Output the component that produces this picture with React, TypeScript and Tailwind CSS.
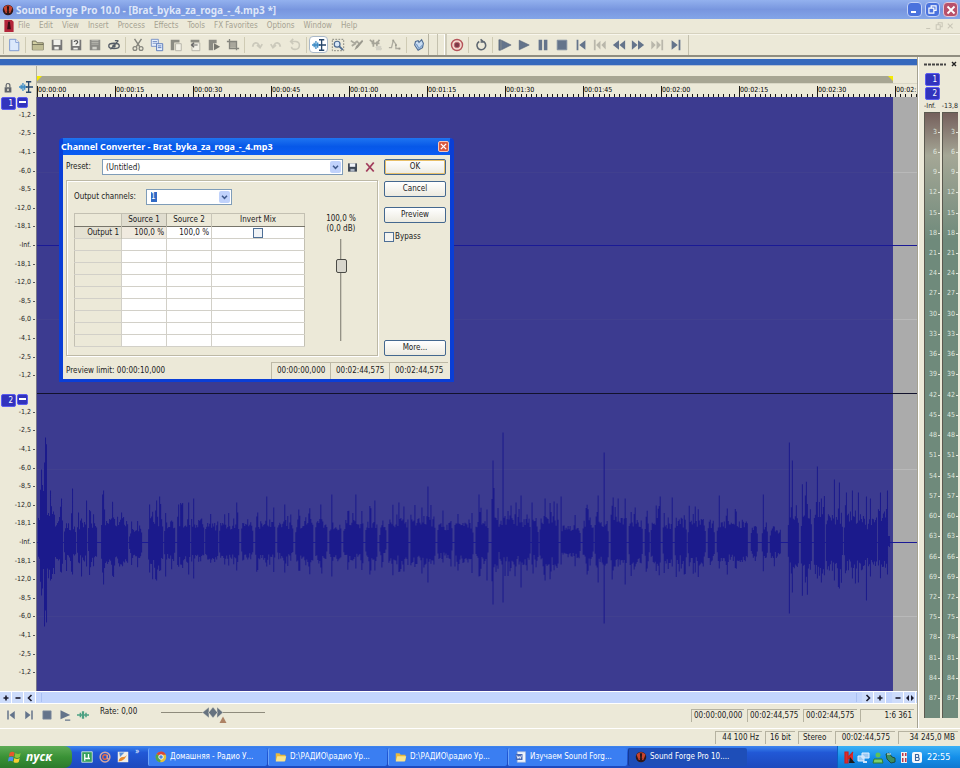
import React, { useState } from "react";
import clsx from "clsx";

const FONT = "font-['DejaVu_Sans_Condensed','DejaVu_Sans',sans-serif]";

const menus = ["File", "Edit", "View", "Insert", "Process", "Effects", "Tools", "FX Favorites", "Options", "Window", "Help"];

const dbLabels = ["-1,2", "-2,5", "-4,1", "-6,0", "-8,5", "-12,0", "-18,1", "-Inf.", "-18,1", "-12,0", "-8,5", "-6,0", "-4,1", "-2,5", "-1,2"];

const rulerLabels = [
  "00:00:00", "00:00:15", "00:00:30", "00:00:45", "00:01:00", "00:01:15",
  "00:01:30", "00:01:45", "00:02:00", "00:02:15", "00:02:30",
];

const meterLabels = Array.from({ length: 29 }, (_, i) => (i + 1) * 3);

const steel = "#64748b";
const pale = "#b9b7ab";
const mid = "#85857d";

const icons: Record<string, React.ReactNode> = {
  new: (
    <>
      <path d="M3 1.500h7l3.500 3.500v9.500H3z" fill="#dbe8fb" stroke="#7291cf" />
      <path d="M10 1.500V5h3.500" fill="#fff" stroke="#7291cf" />
    </>
  ),
  open: (
    <>
      <path d="M1.500 13.500v-10h4l1.500 2h7v8z" fill="#d3d0a4" stroke="#66654f" />
      <path d="M1.500 7.500h12.500" stroke="#66654f" />
      <path d="M2 8h12v5.500H2z" fill="#c1be95" />
    </>
  ),
  save: (
    <>
      <path d="M2 2h12v12H2z" fill="#777" />
      <path d="M4 2h8v6H4zM5 10h5v3H5z" fill="#f1f1ed" />
    </>
  ),
  saveAs: (
    <>
      <path d="M2 2h12v12H2z" fill="#777" />
      <path d="M4 2h8v7H4zM5 11h5v2H5z" fill="#f1f1ed" />
      <path d="M6 4.500c0-2 4-2 4 0 0 1.500-2 1.500-2 3" fill="none" stroke="#555" strokeWidth="1.300" />
    </>
  ),
  saveAll: (
    <>
      <path d="M2 2h12v12H2z" fill="#8b8b86" />
      <path d="M4 3h8M4 5h8M4 7h8" stroke="#bdbdb6" />
      <path d="M5 10h5v3H5z" fill="#cfcfc8" />
    </>
  ),
  render: (
    <>
      <ellipse cx="8" cy="9" rx="6" ry="3" fill="none" stroke="#555c66" strokeWidth="1.500" />
      <path d="M4 13L13 3M9 3l4 0" stroke="#555c66" strokeWidth="1.400" />
      <circle cx="8" cy="9" r="2" fill="#555c66" />
    </>
  ),
  cut: (
    <>
      <path d="M4 1l6 9M12 1L6 10" stroke={mid} strokeWidth="1.600" />
      <circle cx="4.500" cy="12" r="2.200" fill="none" stroke={mid} strokeWidth="1.400" />
      <circle cx="11.500" cy="12" r="2.200" fill="none" stroke={mid} strokeWidth="1.400" />
    </>
  ),
  copy: (
    <>
      <path d="M1.500 1.500h8v8h-8z" fill="#e6effc" stroke="#6f8cc4" />
      <path d="M3 4h5M3 6h5" stroke="#6f8cc4" />
      <path d="M7.500 6.500h7v8h-7z" fill="#e6effc" stroke="#5072b8" />
      <path d="M9 9h4M9 11h4" stroke="#5072b8" />
    </>
  ),
  paste: (
    <>
      <path d="M2 2h10v3H6v9H2z" fill="#8b8b83" />
      <path d="M7.500 6.500h6.500v8H7.500z" fill="#f2f0e6" stroke="#b1afa4" />
    </>
  ),
  pasteSpecial: (
    <>
      <path d="M3 2h10v3H3z" fill="#8b8b83" />
      <path d="M4.500 5.500h9v9h-9z" fill="#f2f0e6" stroke="#b1afa4" />
      <path d="M11 8H5M7 5.500L4 8l3 2.500" stroke="#666" strokeWidth="1.400" fill="none" />
    </>
  ),
  pastePlay: (
    <>
      <path d="M2 2h9v4H7v8H2z" fill="#8b8b83" />
      <path d="M8 6l7 4-7 4z" fill="#77776f" />
    </>
  ),
  crop: (
    <>
      <path d="M4 4h8v7H4z" fill="#a9a79c" />
      <path d="M4 1v11h11M1 4h11v10" fill="none" stroke={mid} strokeWidth="1.500" />
    </>
  ),
  undo: <path d="M3 10c1-6 6-5 7-2l1 2M8 8l3.500 3L14 7" fill="none" stroke="#cbc9bb" strokeWidth="2" />,
  redo: <path d="M13 10c-1-6-6-5-7-2l-1 2M8 8l-3.500 3L2 7" fill="none" stroke="#cbc9bb" strokeWidth="2" />,
  repeat: <path d="M4 4h5c6 1 5 9-1 9-3 0-4-2-4-3M6 1L3 4l3 3" fill="none" stroke="#cbc9bb" strokeWidth="1.800" />,
  edit: (
    <>
      <path d="M0 8h9M2.500 5.500v5M4.500 3.500v9M6.500 5v6" fill="none" stroke="#3e8cc6" strokeWidth="1.500" />
      <path d="M8 2h6M8 14h6M11 2v12M8 8h8" stroke="#27476b" strokeWidth="1.500" />
    </>
  ),
  magnify: (
    <>
      <path d="M1.500 1.500h13v13h-13z" fill="none" stroke="#7a7a74" strokeDasharray="2 1.500" />
      <circle cx="7" cy="7" r="3.300" fill="#d9e8f8" stroke="#4c6a92" strokeWidth="1.400" />
      <path d="M9.500 9.500l4 4" stroke="#4c6a92" strokeWidth="2" />
    </>
  ),
  pencil: (
    <>
      <path d="M1 3l4 3 3-2 3 3M2 9l5-3" stroke="#aaa89c" strokeWidth="2" fill="none" />
      <path d="M14 2L7 9l-2 5 4-3 6-7z" fill="#9b998e" />
    </>
  ),
  event: (
    <>
      <path d="M1 2l4 4M3 6h9M5 2v8M9 4v6M12 2l-3 4M8 10l6 3" stroke="#a6a498" strokeWidth="2" fill="none" />
      <path d="M8 9h6v5H8z" fill="#d3d1c5" />
    </>
  ),
  envelope: (
    <>
      <path d="M1 11h3l2-8 3 4v5h5" fill="none" stroke="#aeaca0" strokeWidth="1.500" />
      <path d="M5 2h2v2H5zM8 7h2v2H8zM12 11h2v2h-2z" fill="#9e9c90" />
    </>
  ),
  plugin: (
    <>
      <path d="M4 4l3-1 1 2 3-3 2 4-1 5-5 3-4-6z" fill="#c9ddf2" stroke="#506e95" strokeWidth="1.300" />
      <path d="M5 7l3 5 4-4" fill="none" stroke="#6f95c4" strokeWidth="1.200" />
    </>
  ),
  record: (
    <>
      <circle cx="8" cy="8" r="6.300" fill="#f3dcd2" stroke="#b5545a" strokeWidth="1.600" />
      <circle cx="8" cy="8" r="3.200" fill="#7d3a48" stroke="#c46b70" />
    </>
  ),
  loop: <path d="M6 4a5 5 0 1 0 5.500.5M7.500 1.500L11 4.500H7.500" fill="none" stroke="#5d6670" strokeWidth="1.800" />,
  playAll: <path d="M1 2h2v12H1zM4 2.500L15 8 4 13.500z" fill={steel} stroke="#49596e" strokeWidth=".6" />,
  play: <path d="M2.500 2.500L14 8 2.500 13.500z" fill={steel} stroke="#49596e" strokeWidth=".6" />,
  pause: <path d="M3 2h4v12H3zM9 2h4v12H9z" fill={steel} />,
  stop: <path d="M2.500 2.500h11v11h-11z" fill={steel} stroke="#8290a2" />,
  start: <path d="M3 2h2v12H3zM13 2.500v11L6 8z" fill={steel} />,
  prev: <path d="M1 2h2v12H1zM8.500 3v10L3.500 8zM14.500 3v10l-5-5z" fill={pale} />,
  rewind: <path d="M8 2.500v11L1 8zM15 2.500v11L8.500 8z" fill={steel} />,
  forward: <path d="M1 2.500v11L7.500 8zM8 2.500v11L15 8z" fill={steel} />,
  next: <path d="M13 2h2v12h-2zM7.500 3v10l5-5zM1.500 3v10l5-5z" fill={pale} />,
  end: <path d="M11 2h2v12h-2zM3 2.500v11L10 8z" fill={steel} />,
  playUnder: <path d="M2 1.500L15 8 2 13.500zM8 14h7v1.500H8z" fill={steel} />,
  scrub: <path d="M0 7h16v2H0zM3.500 5h2v6h-2zM6.500 3h3v10h-3zM11 5h2v6h-2z" fill="#4ca183" />,
  lock: (
    <>
      <path d="M3.500 7h9v7h-9z" fill="#60656b" />
      <path d="M5.500 7V4.500a2.500 2.500 0 0 1 5 0V7" fill="none" stroke="#60656b" strokeWidth="1.600" />
      <path d="M7 9h2v3H7z" fill="#e8e5d6" />
    </>
  ),
  floppy: (
    <>
      <path d="M1.500 2h13v12h-13z" fill="#3c4654" />
      <path d="M4 2h8v5H4z" fill="#eef2f8" />
      <path d="M5 10h6v4H5z" fill="#aab3c0" />
    </>
  ),
  remove: <path d="M3 3l10 11M13 2L3 14" stroke="#a23c5c" strokeWidth="2.400" />,
  folder: (
    <>
      <path d="M1 13V3h5l1.500 2H14v8z" fill="#e9b93c" />
      <path d="M1 14l2-7h12l-2 7z" fill="#fbe48c" />
    </>
  ),
  chrome: (
    <>
      <circle cx="8" cy="8" r="7" fill="#e4c33b" />
      <path d="M8 8L2 4a7 7 0 0 1 12.500 1H8z" fill="#d9453a" />
      <path d="M8 8l-1 7A7 7 0 0 1 2 4z" fill="#4fa44e" />
      <circle cx="8" cy="8" r="3" fill="#4a86dd" stroke="#fff" strokeWidth="1.200" />
    </>
  ),
  word: (
    <>
      <path d="M3 1h11v14H3z" fill="#eef3fb" stroke="#9fb4da" />
      <path d="M1 4h9v8H1z" fill="#4668b5" />
      <path d="M2.500 6l1.500 4 1.500-3L7 10l1.500-4" fill="none" stroke="#fff" strokeWidth="1.200" />
    </>
  ),
  forge: (
    <>
      <circle cx="8" cy="8" r="7" fill="#33191a" />
      <path d="M2 5a7 7 0 0 1 12 0l-3 7H5z" fill="#c8442e" />
      <path d="M6.500 3h3l-.5 7h1l-2 4-2-4h1z" fill="#2a1415" />
    </>
  ),
};

const Icon = ({ name, className = "size-[14px]" }: { name: string; className?: string }) => (
  <svg viewBox="0 0 16 16" className={clsx("shrink-0", className)} aria-hidden="true">
    {icons[name]}
  </svg>
);

const ToolButton = ({ name, active }: { name: string; active?: boolean }) => (
  <button
    aria-label={name}
    className={clsx(
      "flex h-[17px] w-[19px] shrink-0 items-center justify-center",
      active && "rounded-sm border border-[#a9b8c8] bg-white"
    )}
  >
    <Icon name={name} />
  </button>
);

const Separator = () => (
  <div className="flex w-[5px] shrink-0 justify-center">
    <span className="h-4 w-px bg-[#cfcbb4]" />
  </div>
);

const TitleBar = () => (
  <header className="flex h-[19px] items-center bg-linear-to-b from-[#93b1ee] via-[#7896df] to-[#83a5e8] px-[2px]">
    <Icon name="forge" className="size-[12px]" />
    <h1 className="ml-[2px] flex-1 font-['Noto_Sans',sans-serif] text-[10px] leading-[14px] font-bold whitespace-nowrap text-[#dde6f9]">
      Sound Forge Pro 10.0 - [Brat_byka_za_roga_-_4.mp3 *]
    </h1>
    <div className="flex gap-[3px]">
      <button aria-label="Minimize" className="flex size-[15px] items-end rounded-sm border border-[#c3d2f6] bg-[#4a72dd] p-[3px]">
        <span className="h-[2px] w-[5px] bg-white" />
      </button>
      <button aria-label="Restore" className="flex size-[15px] items-center justify-center rounded-sm border border-[#c3d2f6] bg-[#4a72dd]">
        <svg viewBox="0 0 10 10" className="size-[9px]" fill="none" stroke="#fff" strokeWidth="1.300">
          <path d="M3.500 3V1h5.500v5H7M1 3.500h5.500V9H1z" />
        </svg>
      </button>
      <button aria-label="Close" className="flex size-[15px] items-center justify-center rounded-sm border border-[#e3c9d8] bg-[#b8506a]">
        <svg viewBox="0 0 10 10" className="size-[10px]" stroke="#fff" strokeWidth="1.800">
          <path d="M1.500 1.500l7 7M8.500 1.500l-7 7" />
        </svg>
      </button>
    </div>
  </header>
);

const MenuBar = () => (
  <nav className="flex h-[15px] items-center border-b border-[#d6d2bf] pl-1 text-[#a5a292]">
    <svg viewBox="0 0 10 13" className="mr-[4px] h-[12px] w-[10px]">
      <path d="M0 0h8l2 2v11H0z" fill="#b3263a" />
      <path d="M4 2h2l1 8H3z" fill="#3a0d14" />
    </svg>
    <div className="flex flex-1 gap-[9px]">
      {menus.map((m) => (
        <button key={m} className="whitespace-nowrap">
          {m}
        </button>
      ))}
    </div>
    <div className="flex gap-2 pr-1">
      <svg viewBox="0 0 36 10" className="h-[8px] w-[34px]" fill="none" stroke="#c9c6b7" strokeWidth="1.300">
        <path d="M2 8h5M17 3V1h5v5h-2M14.500 3.500h5V9h-5zM29 2l6 6M35 2l-6 6" />
      </svg>
    </div>
  </nav>
);

const Toolbar = () => (
  <div className="flex h-[23px] items-center border-b-2 border-[#8f8d80] pl-[3px] [box-shadow:inset_0_1px_#f8f6ec]">
    <span className="h-[18px] w-px bg-[#c4c1ae]" />
    <ToolButton name="new" />
    <Separator />
    {["open", "save", "saveAs", "saveAll", "render"].map((n) => <ToolButton key={n} name={n} />)}
    <Separator />
    {["cut", "copy", "paste", "pasteSpecial", "pastePlay", "crop"].map((n) => <ToolButton key={n} name={n} />)}
    <Separator />
    {["undo", "redo", "repeat"].map((n) => <ToolButton key={n} name={n} />)}
    <Separator />
    <ToolButton name="edit" active />
    {["magnify", "pencil", "event", "envelope"].map((n) => <ToolButton key={n} name={n} />)}
    <Separator />
    <ToolButton name="plugin" />
    <div className="flex h-[21px] w-[19px] justify-between border-l border-[#b7b4a2] pl-2">
      <span className="w-px bg-[#c4c1ae]" />
      <span className="w-[3px] border-l border-white bg-[#cfccba]" />
    </div>
    <ToolButton name="record" />
    <Separator />
    <ToolButton name="loop" />
    <Separator />
    {["playAll", "play", "pause", "stop", "start", "prev", "rewind", "forward", "next", "end"].map((n) => (
      <ToolButton key={n} name={n} />
    ))}
    <span className="ml-[3px] h-5 w-px bg-[#c4c1ae]" />
  </div>
);

const minorTicks = Array.from({ length: 14 }, (_, i) => `M${Math.round((i + 1) * 5.2) - 0.5} 0V3`).join("");

const Ruler = () => (
  <div className="flex h-[31px]">
    <div className="flex w-[37px] shrink-0 items-end gap-[5px] border-r border-[#b4b19e] pb-[3px] pl-[2px]">
      <Icon name="lock" className="size-[12px]" />
      <Icon name="edit" className="size-[14px]" />
    </div>
    <div className="min-w-0 flex-1 pt-[10px]">
      <div className="mr-[24px] flex h-[7px] justify-between bg-[#a7a593]">
        <svg viewBox="0 0 5 5" className="size-[5px]"><path d="M0 0h5L0 5z" fill="#f4ea00" /></svg>
        <svg viewBox="0 0 5 5" className="size-[5px]"><path d="M0 0h5v5z" fill="#f4ea00" /></svg>
      </div>
      <div className="flex h-[14px] items-end overflow-hidden border-t border-[#dad7c6]">
        {rulerLabels.map((label) => (
          <div key={label} className="w-[78px] shrink-0 border-l border-[#1a1a1a]">
            <span className="block text-[7px] leading-[8px] text-black">{label}</span>
            <svg viewBox="0 0 77 3" className="h-[3px] w-[77px]" stroke="#1a1a1a">
              <path d={minorTicks} />
            </svg>
          </div>
        ))}
        <div className="min-w-0 flex-1 border-l border-[#1a1a1a]">
          <span className="block text-[7px] leading-[8px] text-black">00:02:</span>
          <svg viewBox="0 0 22 3" className="h-[3px] w-[22px]" stroke="#1a1a1a">
            <path d={minorTicks} />
          </svg>
        </div>
      </div>
    </div>
  </div>
);

// [start, end, amplitude up, amplitude down] in wave units
const bursts: number[][] = [
  [1, 3, 30, 24], [3, 7, 70, 52], [7, 10, 84, 70], [10, 18, 34, 32], [18, 26, 22, 18], [27, 39, 16, 16], [40, 50, 19, 18],
  [51, 60, 18, 17], [64, 91, 22, 20], [92, 105, 12, 13], [111, 126, 23, 22], [127, 138, 19, 16], [140, 153, 21, 19],
  [154, 167, 20, 17], [168, 181, 17, 15], [182, 202, 18, 16], [204, 216, 17, 15], [218, 238, 19, 17], [240, 256, 18, 15],
  [258, 276, 20, 17], [278, 290, 20, 18], [292, 304, 17, 16], [306, 326, 19, 16], [328, 340, 20, 18], [342, 349, 15, 14],
  [351, 371, 20, 18], [373, 398, 22, 19], [400, 415, 17, 14], [417, 436, 20, 18], [438, 451, 19, 18], [454, 457, 70, 48],
  [457, 461, 32, 30], [461, 493, 22, 19], [494, 501, 20, 18], [502, 521, 22, 20], [523, 543, 16, 14], [545, 556, 20, 17],
  [557, 571, 22, 20], [573, 589, 22, 20], [591, 605, 20, 19], [607, 612, 17, 18], [613, 623, 20, 18], [625, 635, 19, 18],
  [637, 649, 20, 18], [650, 668, 20, 20], [670, 677, 20, 19], [679, 710, 18, 17], [713, 720, 14, 16], [724, 730, 18, 17],
  [732, 743, 12, 13], [750, 761, 32, 26], [763, 774, 32, 30], [776, 787, 36, 28], [788, 805, 24, 24], [806, 828, 26, 24],
  [829, 839, 24, 20], [840, 850, 30, 24], [850, 852, 8, 6],
];

// [x, up, down]
const spikes: number[][] = [
  [8, 105, 68], [7, 80, 84], [13, 52, 38], [24, 44, 30], [35, 54, 32], [41, 30, 20], [49, 42, 24], [65, 48, 30], [66, 52, 42],
  [84, 30, 22], [112, 38, 30], [119, 42, 38], [122, 46, 24], [128, 28, 34], [144, 38, 20], [151, 40, 32], [156, 44, 36], [199, 40, 28], [229, 46, 24],
  [247, 38, 30], [283, 38, 25], [294, 48, 34], [318, 48, 26], [337, 42, 28], [361, 40, 24], [390, 56, 40], [405, 32, 20], [441, 48, 34],
  [449, 33, 38], [455, 82, 62], [465, 110, 60], [483, 47, 45], [494, 40, 22], [507, 44, 38], [523, 46, 22], [560, 47, 40], [566, 90, 81],
  [575, 45, 28], [580, 44, 24], [587, 44, 42], [622, 46, 20], [634, 45, 24], [657, 36, 30], [681, 47, 26], [689, 34, 30], [725, 48, 28],
  [751, 100, 71], [754, 82, 50], [767, 47, 40], [779, 76, 36], [783, 44, 40], [796, 63, 38], [801, 60, 34], [808, 50, 28], [814, 52, 36],
  [820, 50, 40], [828, 46, 58], [832, 44, 34], [849, 52, 32],
];

const wavePath = () => {
  let seed = 7;
  const rand = () => {
    seed = (seed * 16807) % 2147483647;
    return seed / 2147483647;
  };
  let d = "";
  bursts.forEach(([from, to, up, down]) => {
    for (let x = from; x < to; x++) {
      const edge = Math.min(x - from, to - 1 - x) === 0 ? 0.7 : 1;
      const jump = rand() > 0.82 ? 1.6 : 1;
      const u = up * edge * jump * (0.7 + rand() * 0.5);
      const l = down * edge * jump * (0.7 + rand() * 0.5);
      d += `M${x + 0.5} ${(148.5 - u).toFixed(1)}V${(148.5 + l).toFixed(1)}`;
    }
  });
  spikes.forEach(([x, u, l]) => {
    d += `M${x + 0.5} ${148.5 - u}V${148.5 + l}`;
  });
  return d;
};

const wave = wavePath();

const ChannelBadge = ({ n }: { n: number }) => (
  <span className="flex h-[13px] w-[15px] items-center justify-end rounded-xs border border-[#5a5cf0] bg-[#3133bd] pr-[2px] text-[8px] leading-none text-white">
    {n}
  </span>
);

const Track = ({ n, hasWave }: { n: number; hasWave?: boolean }) => (
  <div className="flex min-h-[297px] flex-1">
    <div className="relative flex w-[37px] shrink-0 flex-col border-r border-[#77758a] py-[9px] text-[7px] leading-[9px]">
      <div className="absolute top-0 left-[1px] flex gap-[1px]">
        <ChannelBadge n={n} />
        <button aria-label="Minimize channel" className="flex h-[11px] w-[11px] items-start justify-center rounded-xs border border-[#5a5cf0] bg-[#3133bd] pt-[3px]">
          <span className="h-[2px] w-[7px] bg-white" />
        </button>
      </div>
      {dbLabels.map((l, i) => (
        <span key={i} className="flex flex-1 items-center justify-end gap-[2px] pr-px text-[#222]">
          {l}
          <span className="h-px w-[2px] bg-[#555]" />
        </span>
      ))}
    </div>
    <div className="relative min-w-0 flex-1">
      <svg viewBox="0 0 879 297" preserveAspectRatio="none" className="absolute inset-0 size-full">
        <rect width="879" height="297" fill="#ababab" />
        <path d="M0 75.500H879M0 222.500H879" stroke="#b9b9b9" />
        <rect width="855" height="297" fill="#3c3b90" />
        <path d="M0 75.500H855M0 222.500H855" stroke="#41408f" />
        <path d="M0 148.500H879" stroke="#1a1a96" />
        {hasWave && <path d={wave} stroke="#1b1a8c" strokeWidth="1" fill="none" />}
        {!hasWave && <path d="M0 296.500H879" stroke="#12122c" />}
      </svg>
    </div>
  </div>
);

const ScrollButton = ({ children, label }: { children: React.ReactNode; label: string }) => (
  <button aria-label={label} className="flex h-[11px] w-[12px] shrink-0 items-center justify-center border-r border-white bg-[#cddcfb]">
    <svg viewBox="0 0 8 8" className="size-[8px]" fill="none" stroke="#1a1a2c" strokeWidth="1.600">
      {children}
    </svg>
  </button>
);

const HorizontalScroll = () => (
  <div className="flex h-[13px] items-center border-y border-white bg-[#c3d5fd] pr-px">
    <ScrollButton label="Zoom in height"><path d="M1.500 4h5M4 1.500v5" /></ScrollButton>
    <ScrollButton label="Zoom out height"><path d="M1.500 4h5" /></ScrollButton>
    <ScrollButton label="Scroll left"><path d="M5.500 1L2.500 4l3 3" /></ScrollButton>
    <div className="mx-[5px] flex h-[9px] flex-1 border-x border-[#aac0f3]" />
    <ScrollButton label="Scroll right"><path d="M2.500 1l3 3-3 3" /></ScrollButton>
    <ScrollButton label="Zoom in time"><path d="M1.500 4h5M4 1.500v5" /></ScrollButton>
    <span className="w-[6px]" />
    <ScrollButton label="Zoom out time"><path d="M1.500 4h5" /></ScrollButton>
    <ScrollButton label="Zoom selection"><path d="M3 1L0 4l3 3zM5 1l3 3-3 3z" fill="#1a1a2c" strokeWidth="0" /></ScrollButton>
  </div>
);

const Pane = ({ children, className }: { children: React.ReactNode; className?: string }) => (
  <span className={clsx("flex h-[13px] items-center border-t border-l border-[#b5b2a0] whitespace-nowrap", className)}>
    {children}
  </span>
);

const Transport = () => (
  <div className="flex h-[24px] items-start">
    <div className="flex pt-[2px] pl-[2px]">
      {["start", "end", "stop", "playUnder", "scrub"].map((n) => (
        <button key={n} aria-label={n} className="flex h-[17px] w-[18px] items-center justify-center">
          <Icon name={n} className="size-[12px]" />
        </button>
      ))}
    </div>
    <span className="ml-[8px] w-[61px] pt-[3px] leading-[10px]">Rate: 0,00</span>
    <svg viewBox="0 0 104 18" className="mt-px h-[18px] w-[104px]">
      <path d="M0 7.500h104" stroke="#8e8b7c" />
      <g fill="#66727f" stroke="#e9e6d6" strokeWidth=".5">
        <path d="M48 2v11L41.500 7.500z" />
        <path d="M56 2v11l6-5.500z" />
        <path d="M52 2l4.500 5.500L52 13l-4.500-5.500z" />
      </g>
      <path d="M62 11.500l3.500 6.500h-7z" fill="#ad8264" />
    </svg>
    <div className="ml-auto flex gap-[3px] pt-[5px] pr-[3px]">
      <Pane className="w-[53px] pl-[2px]">00:00:00,000</Pane>
      <Pane className="w-[53px] pl-[2px]">00:02:44,575</Pane>
      <Pane className="w-[54px] pl-[2px]">00:02:44,575</Pane>
      <Pane className="w-[54px] justify-end pr-[2px]">1:6 361</Pane>
    </div>
  </div>
);

const Meter = () => (
  <aside className="flex w-[43px] shrink-0 flex-col border-l border-[#a5a291] pb-[10px] [box-shadow:inset_1px_0_#fff]">
    <div className="flex h-[14px] items-center justify-between pr-[3px] pl-[6px]">
      <svg viewBox="0 0 22 3" className="h-[3px] w-[22px]" stroke="#444" strokeWidth="2" strokeDasharray="3 1">
        <path d="M0 1.500h22" />
      </svg>
      <button aria-label="Close meters">
        <svg viewBox="0 0 6 6" className="size-[6px]" stroke="#222" strokeWidth="1.400"><path d="M1 1l4 4M5 1L1 5" /></svg>
      </button>
    </div>
    <div className="flex flex-col gap-px pt-[2px] pl-[7px]">
      <ChannelBadge n={1} />
      <ChannelBadge n={2} />
    </div>
    <div className="flex h-[12px] items-center justify-between pt-[1px] pr-[2px] pl-[6px] text-[7px] leading-[9px] whitespace-nowrap">
      <span>-Inf.</span>
      <span>-13,8</span>
    </div>
    <div className="flex flex-1 gap-[2px] pr-[2px] pl-[6px]">
      {[1, 2].map((c) => (
        <div
          key={c}
          className="flex flex-1 flex-col border-t border-l border-[#5c5a50] bg-linear-to-b from-[#75605c] from-0% via-[#a5a796] via-[7%] to-[#6f8a7b] to-[21%] py-[9px] text-[7px] leading-[9px] text-[#dfe6df]"
        >
          {meterLabels.map((v) => (
            <span key={v} className="flex flex-1 items-center justify-end gap-px">
              {v}
              <span className="h-px w-[2px] bg-[#dfe6df]" />
            </span>
          ))}
        </div>
      ))}
    </div>
  </aside>
);

const ComboArrow = () => (
  <span className="pointer-events-none flex h-full w-[11px] shrink-0 items-center justify-center rounded-xs bg-[#c0d2fb]">
    <svg viewBox="0 0 8 6" className="h-[5px] w-[7px]" fill="none" stroke="#3f5a8c" strokeWidth="1.800">
      <path d="M1 1l3 3 3-3" />
    </svg>
  </span>
);

const DialogButton = ({ children, primary }: { children: React.ReactNode; primary?: boolean }) => (
  <button
    className={clsx(
      "h-[16px] w-full rounded-xs border border-[#44688f] bg-linear-to-b from-white to-[#eceae0] leading-[14px]",
      primary && "[box-shadow:inset_0_0_0_1px_#e8c069]"
    )}
  >
    {children}
  </button>
);

const ChannelConverter = () => {
  const [level, setLevel] = useState(77);
  const [bypass, setBypass] = useState(false);

  return (
    <section className="absolute top-[138px] left-[59px] w-[395px] rounded-t-sm border-x-[4px] border-b-[3px] border-[#0a3ed6] bg-[#ece9d8]">
      <div className="flex h-[17px] items-center bg-linear-to-b from-[#1f74f0] via-[#0758e8] to-[#0a5cf4] pr-[1px]">
        <h2 className="-ml-[2px] flex-1 pt-px font-['Noto_Sans',sans-serif] text-[9px] leading-[12px] font-bold text-white">
          Channel Converter - Brat_byka_za_roga_-_4.mp3
        </h2>
        <button aria-label="Close" className="flex size-[11px] items-center justify-center rounded-xs border border-[#f4c6ba] bg-[#d95a3f]">
          <svg viewBox="0 0 8 8" className="size-[7px]" stroke="#fff" strokeWidth="1.600"><path d="M1 1l6 6M7 1L1 7" /></svg>
        </button>
      </div>

      <div className="flex gap-[6px] pt-[4px] pr-[4px] pl-[3px]">
        <div className="min-w-0 flex-1">
          <div className="flex h-[16px] items-center">
            <label htmlFor="preset" className="w-[36px]">Preset:</label>
            <div className="flex h-[16px] w-[241px] items-center border border-[#7f9db9] bg-white p-px">
              <select id="preset" className="h-full min-w-0 flex-1 appearance-none bg-white pl-[2px] leading-[11px]">
                <option>(Untitled)</option>
              </select>
              <ComboArrow />
            </div>
            <button aria-label="Save preset" className="ml-[4px]"><Icon name="floppy" className="size-[11px]" /></button>
            <button aria-label="Delete preset" className="ml-[6px]"><Icon name="remove" className="size-[12px]" /></button>
          </div>

          <div className="mt-[5px] flex h-[176px] border border-[#bdb9a6] pt-[8px] pl-[7px] [box-shadow:1px_1px_#fff,inset_1px_1px_#fff]">
            <div className="w-[231px]">
              <div className="flex h-[16px] items-center">
                <label htmlFor="output" className="w-[72px]">Output channels:</label>
                <div className="flex h-[16px] w-[86px] items-center justify-between border border-[#7f9db9] bg-white p-px">
                  <select id="output" className="ml-[3px] h-[10px] w-[6px] appearance-none bg-[#316ac5] leading-[10px] text-white">
                    <option>1</option>
                    <option>2</option>
                  </select>
                  <ComboArrow />
                </div>
              </div>
              <table className="mt-[8px] w-full table-fixed border-collapse border border-[#c3c0b2] bg-white leading-[10px]">
                <thead>
                  <tr className="h-[13px] border-b border-[#77756a] bg-[#ece9d8]">
                    <th className="w-[47px] border-r border-[#c3c0b2]" aria-label="Output" />
                    <th className="w-[45px] border-r border-[#b2afa0] bg-[#e0ddcf] p-0 font-normal">Source 1</th>
                    <th className="w-[45px] border-r border-[#c9c6b8] p-0 font-normal">Source 2</th>
                    <th className="p-0 font-normal">Invert Mix</th>
                  </tr>
                </thead>
                <tbody>
                  <tr className="h-[12px] border-b border-[#d2d0c8]">
                    <th className="border-r border-[#c3c0b2] bg-[#e4e1d2] p-0 pr-[2px] text-right font-normal">Output 1</th>
                    <td className="border-r border-[#d2d0c8] bg-[#f0eadf] p-0 pr-[2px] text-right">100,0 %</td>
                    <td className="border-r border-[#d2d0c8] p-0 pr-[2px] text-right">100,0 %</td>
                    <td className="p-0">
                      <input type="checkbox" aria-label="Invert Mix" className="mx-auto block size-[10px] appearance-none border border-[#4e6f96] bg-[#f0f3f6]" />
                    </td>
                  </tr>
                  {Array.from({ length: 9 }, (_, i) => (
                    <tr key={i} className="h-[12px] border-b border-[#d2d0c8]">
                      <td className="border-r border-[#d2d0c8] bg-[#ece9d8] p-0" />
                      <td className="border-r border-[#d2d0c8] p-0" />
                      <td className="border-r border-[#d2d0c8] p-0" />
                      <td className="p-0" />
                    </tr>
                  ))}
                </tbody>
              </table>
            </div>
            <div className="flex flex-1 flex-col items-center pt-[25px] leading-[10px]">
              <label htmlFor="gain" className="text-center">
                100,0 %
                <br />
                (0,0 dB)
              </label>
              <input
                id="gain"
                type="range"
                value={level}
                onChange={(e) => setLevel(Number(e.target.value))}
                className="mt-[5px] h-[102px] w-[14px] appearance-none bg-linear-to-r from-transparent from-[6px] via-[#77756b] via-[6px] to-transparent to-[8px] [direction:rtl] [writing-mode:vertical-lr] [&::-webkit-slider-thumb]:h-[14px] [&::-webkit-slider-thumb]:w-[11px] [&::-webkit-slider-thumb]:appearance-none [&::-webkit-slider-thumb]:rounded-xs [&::-webkit-slider-thumb]:border [&::-webkit-slider-thumb]:border-[#4b4b46] [&::-webkit-slider-thumb]:bg-[#d8d6cc]"
              />
            </div>
          </div>
        </div>

        <div className="flex w-[62px] flex-col">
          <DialogButton primary>OK</DialogButton>
          <div className="h-[6px]" />
          <DialogButton>Cancel</DialogButton>
          <div className="h-[10px]" />
          <DialogButton>Preview</DialogButton>
          <label className="mt-[9px] flex items-center gap-[1px]">
            <input
              type="checkbox"
              checked={bypass}
              onChange={() => setBypass(!bypass)}
              className="size-[10px] appearance-none border border-[#4e6f96] bg-[#f4f4f0] checked:bg-[#316ac5]"
            />
            Bypass
          </label>
          <div className="flex-1" />
          <DialogButton>More...</DialogButton>
        </div>
      </div>

      <div className="mt-[6px] flex h-[17px] items-center justify-between pr-[2px] pl-[3px]">
        <span>Preview limit: 00:00:10,000</span>
        <div className="flex h-full border-t border-[#bdb9a6]">
          {["00:00:00,000", "00:02:44,575", "00:02:44,575"].map((t, i) => (
            <span key={i} className="flex w-[59px] items-center border-l border-[#bdb9a6] pl-[5px]">
              {t}
            </span>
          ))}
        </div>
      </div>
    </section>
  );
};

const tasks = [
  { icon: "chrome", label: "Домашняя - Радио У..." },
  { icon: "folder", label: "D:\\РАДИО\\радио Ур..." },
  { icon: "folder", label: "D:\\РАДИО\\радио Ур..." },
  { icon: "word", label: "Изучаем Sound Forg..." },
  { icon: "forge", label: "Sound Forge Pro 10....", active: true },
];

const Taskbar = () => (
  <footer className="flex h-[22px] items-stretch bg-linear-to-b from-[#3f86ef] via-[#2158d6] via-30% to-[#1d49bd] text-white">
    <button className="flex w-[72px] items-center gap-[4px] rounded-r-lg bg-linear-to-b from-[#5eac56] via-[#3a9236] to-[#2c7a2b] pl-[8px]">
      <svg viewBox="0 0 16 16" className="size-[14px]">
        <path d="M2 3q3-2 5.500 0L6.500 7.500Q4 6 1 7.500z" fill="#e8572c" />
        <path d="M8.500 3.500q3 2 6 0L13.500 8q-3 2-6 0z" fill="#8bc63c" />
        <path d="M.8 8.700q3-2 5.500 0L5.300 13Q3 11.500 0 13z" fill="#4a8df0" />
        <path d="M7.300 9.200q3 2 6 0l-1 4.500q-3 2-6 0z" fill="#f6cf32" />
      </svg>
      <span className="font-['Open_Sans',sans-serif] text-[12px] leading-[14px] font-bold italic">пуск</span>
    </button>
    <div className="flex w-[76px] items-center gap-[6px] pl-[9px]">
      <svg viewBox="0 0 16 16" className="size-[12px]">
        <path d="M1 1h14v14H1z" fill="#35a05c" stroke="#e8f5ec" />
        <path d="M5 4v9M5 9q3 2 5 0V4v6h2" fill="none" stroke="#fff" strokeWidth="1.800" />
      </svg>
      <svg viewBox="0 0 16 16" className="size-[12px]" fill="none">
        <circle cx="8" cy="8" r="6.500" stroke="#d5a7a0" strokeWidth="2" />
        <circle cx="8" cy="8" r="3" stroke="#e8673f" strokeWidth="1.800" />
        <path d="M11 5v5q2 2 3-1" stroke="#d5a7a0" strokeWidth="1.500" />
      </svg>
      <svg viewBox="0 0 16 16" className="size-[12px]">
        <path d="M1 1h14v14H1z" fill="#f1efe6" />
        <path d="M2 14Q3 8 8 8q5 0 6-6-2 11-12 12z" fill="#e88a2c" />
        <path d="M3 2h7L4 8z" fill="#5c91d6" />
      </svg>
      <span className="self-start leading-[12px]">»</span>
    </div>
    <div className="flex min-w-0 flex-1">
      {tasks.map((t, i) => (
        <button
          key={i}
          className={clsx(
            "my-[2px] mr-px flex w-[119px] items-center gap-[3px] rounded-xs border-l pl-[6px] whitespace-nowrap",
            t.active ? "border-[#143a94] bg-[#1e4eb8]" : "border-[#6aa3fa] bg-[#3a7ef2]"
          )}
        >
          <Icon name={t.icon} className="size-[12px]" />
          {t.label}
        </button>
      ))}
    </div>
    <div className="flex w-[123px] items-center gap-[2px] border-l border-[#0c5ec0] bg-linear-to-b from-[#3ab0f5] via-[#1490ea] to-[#0f78d0] pl-[6px]">
      <svg viewBox="0 0 78 13" className="mr-[3px] h-[13px] w-[78px]">
        <path d="M1 1h3v11H1zM9 1L4.500 6 9 12" fill="#d92e2e" stroke="#c92222" strokeWidth="1.200" />
        <path d="M6 6l5 6H5z" fill="#1c1c1c" />
        <path d="M14 5h6v5h-6zM18 2h7v5h-7z" fill="#9cc8f2" stroke="#e3f1ff" />
        <path d="M19 10h4v2h-4z" fill="#cde4fa" />
        <circle cx="34" cy="4" r="2.500" fill="#5fc158" />
        <path d="M30 8h8l1 4H29z" fill="#7dd06b" stroke="#2d7c35" />
        <path d="M42 3l3-1 3 4 3 1v4l-4 1-4-4z" fill="#3d8f60" stroke="#1f4f3b" />
        <path d="M43 3h4" stroke="#e3f1ff" />
        <path d="M57 1h6v11h-6z" fill="#f1efef" />
        <path d="M58 2h1.500v3H58zM61 2h1.500v3H61zM58 7h1.500v4H58zM61 7h1.500v4H61z" fill="#b8384c" />
        <rect x="68" y="1" width="10" height="11" rx="2" fill="#f4f7fb" />
        <path d="M71.500 3.500h2.500q1.500 1.500 0 3h-2.500zM71.500 6.500h3q1.500 1.500 0 3h-3z" fill="none" stroke="#39649f" strokeWidth="1.100" />
      </svg>
      <time className="text-[9px] leading-[11px]">22:55</time>
    </div>
  </footer>
);

const App = () => (
  <div className={clsx("relative flex min-h-screen flex-col bg-[#ece9d8] text-[8px] leading-[10px] text-[#1b1b1b]", FONT)}>
    <TitleBar />
    <MenuBar />
    <Toolbar />
    <div className="flex flex-1">
      <main className="flex min-w-0 flex-1 flex-col">
        <div className="mt-[2px] h-[6px] bg-[#3568bd]" />
        <div className="flex flex-1 flex-col border-t border-[#b6bfd0]">
          <Ruler />
          <Track n={1} />
          <Track n={2} hasWave />
        </div>
        <HorizontalScroll />
        <Transport />
      </main>
      <Meter />
    </div>
    <div className="flex h-[18px] items-center justify-end gap-[3px] border-t border-white pr-[2px]">
      <Pane className="w-[47px] justify-end pr-[3px]">44 100 Hz</Pane>
      <Pane className="w-[30px] pl-[4px]">16 bit</Pane>
      <Pane className="w-[34px] pl-[4px]">Stereo</Pane>
      <Pane className="w-[60px] justify-end pr-[5px]">00:02:44,575</Pane>
      <Pane className="w-[60px] justify-end pr-[3px]">34 245,0 MB</Pane>
    </div>
    <Taskbar />
    <ChannelConverter />
  </div>
);

export default App;
